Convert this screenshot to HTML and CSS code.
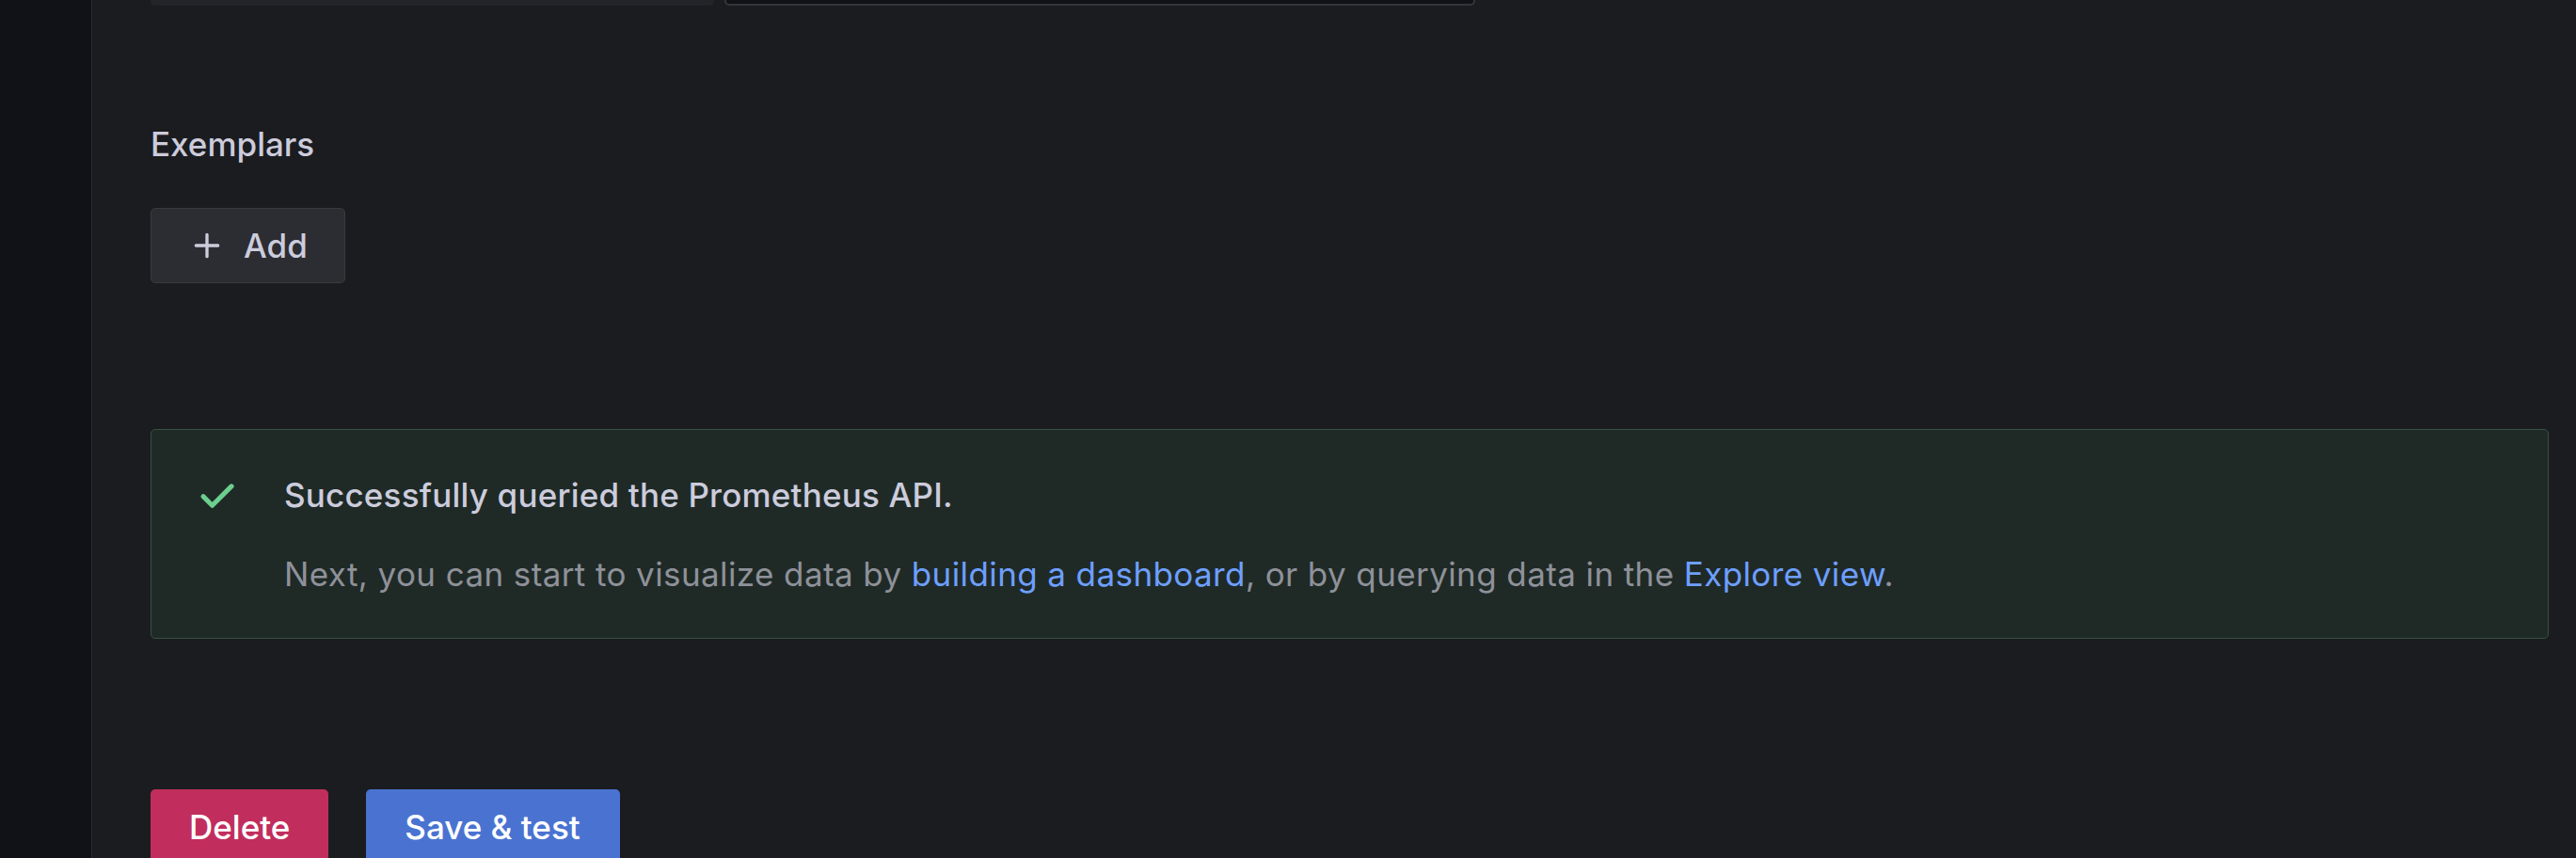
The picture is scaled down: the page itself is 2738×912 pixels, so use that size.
FILE: index.html
```html
<!DOCTYPE html>
<html lang="en">
<head>
<meta charset="utf-8">
<title>Data source settings</title>
<link rel="stylesheet" href="styles.css">
</head>
<body>
<div class="app">
  <aside class="sidebar"></aside>
  <main class="main">
    <div class="top-fields">
      <div class="field field-a"></div>
      <div class="field field-b"></div>
    </div>

    <div class="label">Exemplars</div>
    <button class="btn btn-secondary" type="button">
      <svg class="btn-icon" viewBox="0 0 24 24" width="40" height="40" aria-hidden="true"><path d="M19,11H13V5a1,1,0,0,0-2,0v6H5a1,1,0,0,0,0,2h6v6a1,1,0,0,0,2,0V13h6a1,1,0,0,0,0-2Z"/></svg>
      <span>Add</span>
    </button>

    <div class="alert">
      <div class="alert-icon">
        <svg viewBox="0 0 24 24" width="60" height="60" aria-hidden="true"><path d="M18.71,7.21a1,1,0,0,0-1.42,0L9.84,14.67,6.71,11.53A1,1,0,1,0,5.290,13l3.84,3.84a1,1,0,0,0,1.42,0l8.16-8.16A1,1,0,0,0,18.71,7.21Z"/></svg>
      </div>
      <div class="alert-content">
        <div class="alert-title">Successfully queried the Prometheus API.</div>
        <div class="alert-body">Next, you can start to visualize data by <a href="#">building a dashboard</a>, or by querying data in the <a href="#">Explore view</a>.</div>
      </div>
    </div>

    <div class="actions">
      <button class="btn btn-destructive" type="button">Delete</button>
      <button class="btn btn-primary" type="button">Save &amp; test</button>
    </div>
  </main>
</div>
</body>
</html>
```

FILE: styles.css
```css
* { box-sizing: border-box; }

html, body {
  margin: 0;
  padding: 0;
  background: #1b1c20;
  font-family: Inter, "Noto Sans", sans-serif;
  color: #ccccdc;
}

.app {
  display: flex;
  height: 912px;
  overflow: hidden;
}

.sidebar {
  width: 98px;
  flex: 0 0 98px;
  background: #111217;
  border-right: 1px solid #2a2b30;
}

.main {
  flex: 1;
  padding: 0 29px 0 62px;
  overflow: hidden;
}

.top-fields {
  display: flex;
  gap: 11px;
  height: 6px;
}

.field {
  height: 6px;
  border-radius: 0 0 5px 5px;
}

.field-a {
  width: 599px;
  background: #232429;
}

.field-b {
  width: 798px;
  background: #111217;
  border: 2px solid #34353a;
  border-top: none;
}

.label {
  margin-top: 121px;
  font-size: 35px;
  line-height: 52px;
  font-weight: 500;
  color: #ccccdc;
}

.btn {
  display: inline-flex;
  align-items: center;
  height: 80px;
  padding: 0 40px;
  border: 1px solid transparent;
  border-radius: 5px;
  font-family: Inter, "Noto Sans", sans-serif;
  font-size: 35px;
  font-weight: 500;
  line-height: 52px;
  cursor: pointer;
}

.btn-secondary {
  margin-top: 42px;
  background: #2c2d32;
  border-color: #393a40;
  color: #ccccdc;
  gap: 19px;
  padding: 0 39px;
}

.btn-icon {
  fill: #ccccdc;
  flex: 0 0 40px;
}

.alert {
  margin-top: 155px;
  display: flex;
  padding: 40px 40px 42px 40px;
  background: #1f2a27;
  border: 1px solid #38503f;
  border-radius: 5px;
}

.alert-icon {
  flex: 0 0 60px;
  height: 60px;
  margin-right: 41px;
}

.alert-icon svg {
  display: block;
  fill: #6ccf8e;
}

.alert-content {
  padding-top: 3px;
}

.alert-title {
  font-size: 35px;
  line-height: 52px;
  font-weight: 500;
  letter-spacing: 0.2px;
  color: #ccccdc;
}

.alert-body {
  margin-top: 32px;
  font-size: 35px;
  line-height: 52px;
  font-weight: 400;
  letter-spacing: 0.4px;
  color: #8f9199;
}

.alert-body a {
  color: #6e9fff;
  text-decoration: none;
}

.actions {
  margin-top: 160px;
  display: flex;
  gap: 40px;
}

.btn-destructive {
  background: #c12e5d;
  color: #ffffff;
}

.btn-primary {
  background: #4a73d1;
  color: #ffffff;
  padding: 0 41px 0 40px;
}
```
